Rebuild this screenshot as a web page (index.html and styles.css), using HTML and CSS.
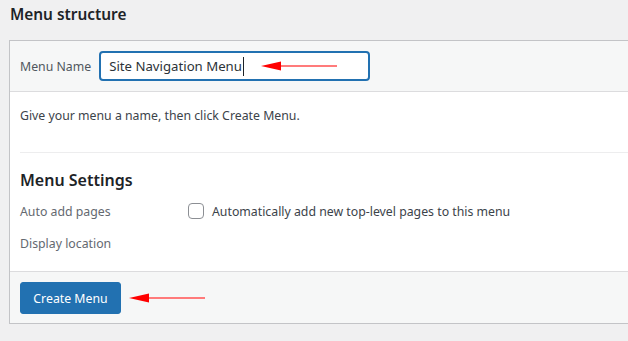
FILE: index.html
```html
<!DOCTYPE html>
<html>
<head>
<meta charset="utf-8">
<link rel="stylesheet" href="styles.css">
</head>
<body>
<div class="wrap">
  <h2 class="title">Menu structure</h2>
  <div class="panel">
    <div class="header">
      <label class="name-label">Menu Name</label>
      <div class="name-input"><span class="name-text">Site Navigation Menu</span><span class="caret"></span></div>
    </div>
    <div class="body">
      <p class="desc">Give your menu a name, then click Create Menu.</p>
      <div class="sep"></div>
      <h3 class="settings-title">Menu Settings</h3>
      <div class="row">
        <div class="row-label">Auto add pages</div>
        <div class="row-field"><span class="checkbox"></span><span class="check-text">Automatically add new top-level pages to this menu</span></div>
      </div>
      <div class="row row-second">
        <div class="row-label">Display location</div>
      </div>
    </div>
    <div class="footer">
      <button class="btn">Create Menu</button>
    </div>
    <svg class="arrow arrow-one" width="80" height="12" viewBox="0 0 80 12">
      <line x1="18" y1="6" x2="76" y2="6" stroke="#ff7b7b" stroke-width="2"/>
      <polygon points="0,6 20,1.5 20,10.5" fill="#ff0000"/>
    </svg>
    <svg class="arrow arrow-two" width="80" height="12" viewBox="0 0 80 12">
      <line x1="18" y1="6" x2="76" y2="6" stroke="#ff7b7b" stroke-width="2"/>
      <polygon points="0,6 20,1.5 20,10.5" fill="#ff0000"/>
    </svg>
  </div>
</div>
</body>
</html>
```
FILE: styles.css
```css
* { box-sizing: border-box; }
body {
  margin: 0;
  background: #f0f0f1;
  font-family: "Noto Sans", "Open Sans", sans-serif;
  font-size: 12.3px;
  color: #3c434a;
}
.wrap { padding: 0 0 0 9px; }
.title {
  margin: 0;
  padding: 4px 0 0 1px;
  height: 40px;
  font-size: 15.4px;
  font-weight: 600;
  line-height: 22px;
  color: #1d2327;
}
.panel {
  position: relative;
  background: #fff;
  border: 1px solid #c3c4c7;
  border-right: none;
}
.header {
  display: flex;
  align-items: center;
  background: #f6f7f7;
  border-bottom: 1px solid #dcdcde;
  padding: 10px 10px;
  gap: 8px;
}
.name-label { color: #50575e; }
.name-input {
  width: 271px;
  height: 30px;
  border: 2px solid #2271b1;
  border-radius: 4px;
  background: #fff;
  display: flex;
  align-items: center;
  padding: 0 8px;
  color: #2c3338;
  font-size: 13.2px;
}
.caret {
  display: inline-block;
  width: 1px;
  height: 19px;
  background: #1d2327;
  margin-left: 1px;
}
.body { padding: 14px 0 18px 10px; }
.desc { margin: 0; line-height: 20px; }
.sep { height: 1px; background: #ededee; margin-top: 26px; }
.settings-title {
  margin: 15px 0 0;
  font-size: 16px;
  font-weight: 600;
  line-height: 24px;
  color: #1d2327;
}
.row { display: flex; align-items: center; margin-top: 9px; height: 20px; }
.row-second { margin-top: 12px; }
.row-label { width: 168px; color: #646970; }
.row-field { display: flex; align-items: center; gap: 8px; color: #3c434a; }
.checkbox {
  width: 16px;
  height: 16px;
  border: 1px solid #8c8f94;
  border-radius: 4px;
  background: #fff;
}
.footer {
  background: #f6f7f7;
  border-top: 1px solid #dcdcde;
  padding: 10px 10px 9px;
}
.btn {
  display: block;
  width: 101px;
  height: 32px;
  background: #2271b1;
  border: 1px solid #2271b1;
  border-radius: 3px;
  color: #fff;
  font-family: inherit;
  font-size: 12.3px;
  padding: 0;
}
.arrow { position: absolute; }
.arrow-one { left: 251px; top: 19px; }
.arrow-two { left: 119px; top: 251px; }
```
